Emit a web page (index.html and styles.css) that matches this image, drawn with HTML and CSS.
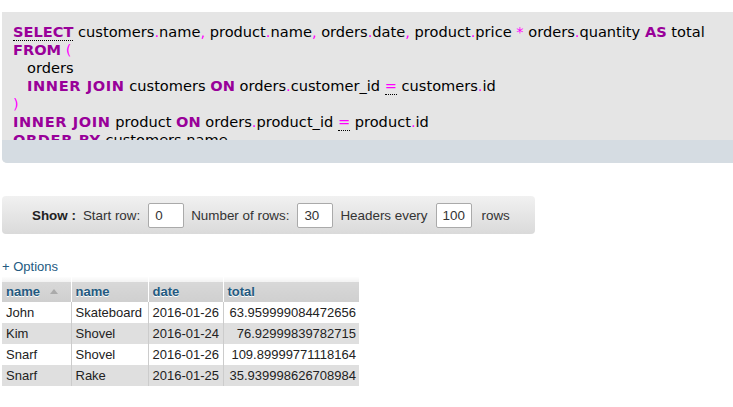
FILE: index.html
```html
<!DOCTYPE html>
<html>
<head>
<meta charset="utf-8">
<link rel="stylesheet" href="styles.css">
</head>
<body>
<div class="sqlbox">
  <div class="code">
    <div class="line"><span class="kw ab">SELECT</span> customers<span class="p">.</span>name<span class="p">,</span> product<span class="p">.</span>name<span class="p">,</span> orders<span class="p">.</span>date<span class="p">,</span> product<span class="p">.</span>price <span class="p">*</span> orders<span class="p">.</span>quantity <span class="kw">AS</span> total</div>
    <div class="line"><span class="kw">FROM</span> <span class="p">(</span></div>
    <div class="line ind">orders</div>
    <div class="line ind"><span class="kw wk">INNER JOIN</span> customers <span class="kw">ON</span> orders<span class="p">.</span>customer_id <span class="p ab">=</span> customers<span class="p">.</span>id</div>
    <div class="line"><span class="p">)</span></div>
    <div class="line"><span class="kw wk">INNER JOIN</span> product <span class="kw">ON</span> orders<span class="p">.</span>product_id <span class="p ab">=</span> product<span class="p">.</span>id</div>
    <div class="line"><span class="kw wk">ORDER BY</span> customers<span class="p">.</span>name</div>
  </div>
  <div class="resizer"></div>
</div>

<div class="showbar">
  <b class="show">Show :</b>
  <span class="lbl">Start row:</span>
  <span class="inp">0</span>
  <span class="lbl">Number of rows:</span>
  <span class="inp">30</span>
  <span class="lbl">Headers every</span>
  <span class="inp wide">100</span>
  <span class="lbl rows">rows</span>
</div>

<div class="options">+ Options</div>

<table class="results">
  <thead>
    <tr>
      <th class="c1">name <span class="sort"></span></th>
      <th class="c2">name</th>
      <th class="c3">date</th>
      <th class="c4">total</th>
    </tr>
  </thead>
  <tbody>
    <tr class="odd"><td>John</td><td>Skateboard</td><td>2016-01-26</td><td class="num">63.959999084472656</td></tr>
    <tr class="even"><td>Kim</td><td>Shovel</td><td>2016-01-24</td><td class="num">76.92999839782715</td></tr>
    <tr class="odd"><td>Snarf</td><td>Shovel</td><td>2016-01-26</td><td class="num">109.89999771118164</td></tr>
    <tr class="even"><td>Snarf</td><td>Rake</td><td>2016-01-25</td><td class="num">35.939998626708984</td></tr>
  </tbody>
</table>
</body>
</html>
```

FILE: styles.css
```css
html, body {
  margin: 0;
  padding: 0;
  background: #fff;
  overflow: hidden;
}
body {
  padding: 12px 0 0 2px;
  font-family: "Liberation Sans", Arial, sans-serif;
  font-size: 13px;
  color: #000;
}
.sqlbox {
  width: 760px;
  background: #e5e5e5;
  border-radius: 0 0 0 5px;
  overflow: hidden;
}
.code {
  height: 117px;
  padding: 11px 0 0 11px;
  overflow: hidden;
  font-family: "DejaVu Sans", Verdana, sans-serif;
  font-size: 14.6px;
  line-height: 18px;
  color: #000;
  white-space: nowrap;
}
.ind { padding-left: 14px; }
.kw { color: #990099; font-weight: bold; }
.kw.wk { letter-spacing: 0.6px; }
.p { color: #ff00ff; }
.ab { border-bottom: 1px dotted #000; }
.resizer {
  height: 23px;
  background: #d5dce2;
}
.showbar {
  margin-top: 33px;
  width: 533px;
  height: 38px;
  box-sizing: border-box;
  border-radius: 4px;
  background: linear-gradient(#f1f1f1, #dadada);
  display: flex;
  align-items: center;
  padding-left: 30px;
  color: #333;
  font-size: 13.4px;
}
.show { color: #222; margin-right: 7px; }
.lbl { margin-right: 8px; }
.inp {
  box-sizing: border-box;
  width: 36px;
  height: 25px;
  background: #fff;
  border: 1px solid #aaa;
  border-radius: 2px;
  padding: 0 0 0 6px;
  line-height: 23px;
  color: #333;
  margin-right: 7px;
}
.inp.wide { margin-right: 10px; }
.options {
  margin-top: 25px;
  color: #235a81;
  line-height: 15px;
}
.results {
  margin-top: 3px;
  border-collapse: collapse;
  border-spacing: 0;
}
.results th {
  height: 25px;
  box-sizing: border-box;
  padding: 4px 4px 0 4px;
  text-align: left;
  color: #235a81;
  font-weight: bold;
  text-shadow: 0 1px 0 #fff;
  background: linear-gradient(#fdfdfd 0, #f2f2f2 20%, #d8d8d8 22%, #cfcfcf 100%);
  border-right: 1px solid #fff;
}
.results th.c1 { width: 69px; }
.results th.c2 { width: 77px; }
.results th.c3 { width: 75px; }
.results th.c4 { width: 136px; border-right: none; }
.c1, .c2, .c3, .c4 { box-sizing: border-box; }
.sort {
  display: inline-block;
  width: 0;
  height: 0;
  margin-left: 6px;
  border-left: 4px solid transparent;
  border-right: 4px solid transparent;
  border-bottom: 5px solid #aaa;
  vertical-align: 2px;
}
.results td {
  height: 21px;
  padding: 0 3px 0 4px;
  color: #222;
  white-space: nowrap;
  border-right: 1px solid #ccc;
}
.results td:last-child { border-right: none; }
.results td.num { text-align: right; }
.results tr.odd { background: #fff; }
.results tr.even { background: #dfdfdf; }
```
